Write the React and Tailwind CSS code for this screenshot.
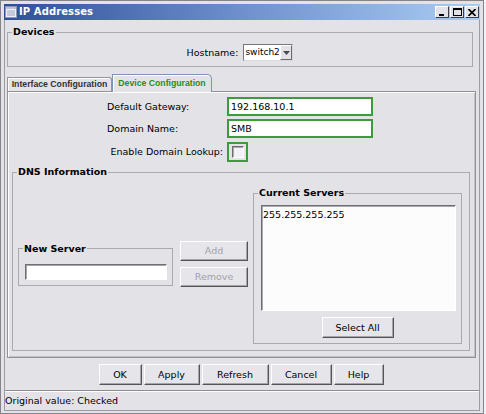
import React from "react";

function Btn({ children, className = "", disabled = false }) {
  return (
    <div
      className={`flex items-center justify-center border border-t-white border-l-white border-r-[#55545a] border-b-[#55545a] shadow-[inset_-1px_-1px_0_#a6a5ab] bg-[#e6e5ea] text-[9.5px] leading-none ${
        disabled ? "text-[#a3a2a8]" : "text-black"
      } ${className}`}
    >
      {children}
    </div>
  );
}

function Group({ title, className = "", children }) {
  return (
    <fieldset className={`border border-[#aaa9ae] min-w-0 ${className}`}>
      <legend className="ml-[4px] px-[1px] text-[9.5px] font-bold leading-[12px] text-black">
        {title}
      </legend>
      {children}
    </fieldset>
  );
}

function TitleBtn({ children }) {
  return (
    <div className="w-[14px] h-[12px] flex items-center justify-center bg-[#e3e2e7] border border-t-white border-l-white border-r-[#3f3e44] border-b-[#3f3e44]">
      {children}
    </div>
  );
}

export default function App() {
  return (
    <div className="w-[486px] h-[414px] bg-[#f3f3f5] font-['DejaVu_Sans',sans-serif] text-black overflow-hidden">
      <div className="w-[484px] h-[414px] border border-[#85848a] bg-[#e3e2e7] pt-[3px] px-[3px] pb-[2px] flex flex-col">
        {/* Title bar */}
        <div className="h-[16px] shrink-0 flex items-center bg-linear-to-r from-[#2f5098] via-[#6f90cd] to-[#abcdf3]">
          <svg width="12" height="12" viewBox="0 0 12 12" className="ml-[1px]">
            <rect x="0.5" y="0.5" width="11" height="11" fill="#eef0f6" stroke="#8c97b3" />
            <rect x="1" y="1" width="10" height="2" fill="#b9c2d8" />
            <line x1="2" y1="5" x2="10" y2="5" stroke="#9aa4bd" />
            <line x1="2" y1="7" x2="10" y2="7" stroke="#9aa4bd" />
            <line x1="2" y1="9" x2="10" y2="9" stroke="#9aa4bd" />
          </svg>
          <span className="ml-[2px] text-[10px] font-bold text-white leading-none tracking-[0.1px]">
            IP Addresses
          </span>
          <div className="ml-auto mr-[1px] flex gap-[1px]">
            <TitleBtn>
              <svg width="8" height="8" viewBox="0 0 8 8">
                <rect x="1" y="6" width="5" height="2" fill="#000" />
              </svg>
            </TitleBtn>
            <TitleBtn>
              <svg width="9" height="8" viewBox="0 0 9 8">
                <rect x="0.5" y="0.5" width="8" height="7" fill="none" stroke="#000" />
                <rect x="0" y="0" width="9" height="2" fill="#000" />
              </svg>
            </TitleBtn>
            <TitleBtn>
              <svg width="8" height="7" viewBox="0 0 8 7">
                <path d="M0.5 0 L7.5 7 M7.5 0 L0.5 7" stroke="#000" strokeWidth="1.6" />
              </svg>
            </TitleBtn>
          </div>
        </div>

        {/* Body */}
        <div className="flex-1 flex flex-col border-x border-b border-[#9d9ca2]">
          {/* Devices */}
          <Group title="Devices" className="mt-[6px] ml-[2px] w-[466px]">
            <div className="pt-[6px] pb-[5px] flex items-center justify-center">
              <span className="text-[9.5px] leading-none">Hostname:</span>
              <div className="ml-[5px] w-[50px] h-[17px] flex border border-t-[#77767c] border-l-[#77767c] border-r-[#d8d7dc] border-b-[#d8d7dc] bg-white">
                <span className="flex-1 pl-[1px] text-[9px] leading-[15px]">switch2</span>
                <div className="w-[14px] h-full flex items-center justify-center bg-[#e3e2e7] border border-t-white border-l-white border-r-[#6b6a70] border-b-[#6b6a70]">
                  <svg width="7" height="4" viewBox="0 0 7 4">
                    <path d="M0 0 H7 L3.5 4 Z" fill="#4a4a50" />
                  </svg>
                </div>
              </div>
            </div>
          </Group>

          {/* Tabs */}
          <div className="mt-[7px] ml-[2px] h-[17px] flex items-end">
            <div className="w-[105px] h-[14px] flex items-center justify-center border-t border-l border-r border-[#96959b] rounded-tr-[3px] shadow-[inset_1px_1px_0_#fff] font-['Liberation_Sans',sans-serif] font-bold text-[8.7px] leading-none text-[#303034]">
              Interface Configuration
            </div>
            <div className="relative z-10 -mb-px w-[100px] h-[18px] flex items-center justify-center border-t border-l border-r border-[#7d95b4] rounded-tr-[5px] bg-[#e3e2e7] shadow-[inset_1px_1px_0_#fff] font-['Liberation_Sans',sans-serif] font-bold text-[8.7px] leading-none text-[#1f8f1f]">
              Device Configuration
            </div>
          </div>

          {/* Tab panel */}
          <div className="ml-[2px] w-[469px] h-[267px] border border-[#929197] shadow-[inset_1px_1px_0_#fff,inset_-1px_-1px_0_#c2c1c6] flex flex-col pt-[5px]">
            <div className="h-[19px] flex items-center">
              <span className="ml-[99px] w-[120px] text-[9.5px] leading-none">Default Gateway:</span>
              <div className="w-[146px] h-[19px] border-2 border-[#3d9b3d] bg-white flex items-center">
                <span className="pl-[2px] text-[9.5px] leading-none">192.168.10.1</span>
              </div>
            </div>
            <div className="mt-[3px] h-[19px] flex items-center">
              <span className="ml-[99px] w-[120px] text-[9.5px] leading-none">Domain Name:</span>
              <div className="w-[146px] h-[19px] border-2 border-[#3d9b3d] bg-white flex items-center">
                <span className="pl-[2px] text-[9.5px] leading-none">SMB</span>
              </div>
            </div>
            <div className="mt-[4px] h-[20px] flex items-center">
              <span className="ml-[99px] w-[120px] pr-[4px] text-right text-[9.5px] leading-none">
                Enable Domain Lookup:
              </span>
              <div className="w-[21px] h-[20px] border-2 border-[#3d9b3d] flex items-center justify-center">
                <div className="w-[12px] h-[12px] bg-[#f2f2f4] border border-t-[#6d6c72] border-l-[#6d6c72] border-r-white border-b-white shadow-[inset_1px_1px_0_#a9a8ae]" />
              </div>
            </div>

            {/* DNS Information */}
            <Group title="DNS Information" className="mt-[4px] ml-[4px] w-[458px]">
              <div className="h-[172px] flex items-center">
                <Group title="New Server" className="ml-[5px] w-[155px]">
                  <div className="mt-[9px] mb-[5px] ml-[6px] w-[142px] h-[16px] bg-white border border-t-[#6f6e74] border-l-[#6f6e74] border-r-white border-b-white shadow-[inset_1px_1px_0_#a7a6ac]" />
                </Group>
                <div className="ml-[7px] w-[68px] flex flex-col gap-[6px]">
                  <Btn className="h-[20px]" disabled>Add</Btn>
                  <Btn className="h-[20px]" disabled>Remove</Btn>
                </div>
                <Group title="Current Servers" className="ml-[5px] w-[209px] self-stretch mt-[9px] mb-[6px]">
                  <div className="mt-[6px] ml-[7px] w-[195px] h-[106px] bg-[#fcfcfd] border border-t-[#6f6e74] border-l-[#6f6e74] border-r-white border-b-white shadow-[inset_1px_1px_0_#a7a6ac] pt-[3px] pl-[1px] text-[9.5px] leading-[12px]">
                    255.255.255.255
                  </div>
                  <div className="mt-[6px] pb-[5px] flex justify-center">
                    <Btn className="w-[72px] h-[21px]">Select All</Btn>
                  </div>
                </Group>
              </div>
            </Group>
          </div>

          {/* Bottom buttons */}
          <div className="mt-[6px] h-[21px] flex justify-center gap-[2px] pr-[2px]">
            <Btn className="w-[43px] h-[21px]">OK</Btn>
            <Btn className="w-[56px] h-[21px]">Apply</Btn>
            <Btn className="w-[67px] h-[21px]">Refresh</Btn>
            <Btn className="w-[61px] h-[21px]">Cancel</Btn>
            <Btn className="w-[50px] h-[21px]">Help</Btn>
          </div>

          {/* Status bar */}
          <div className="mt-[5px] h-[20px] border-t border-[#8c8b91] shadow-[inset_0_1px_0_#fff] flex items-center">
            <span className="text-[9.5px] leading-none">Original value: Checked</span>
          </div>
        </div>
      </div>
    </div>
  );
}
